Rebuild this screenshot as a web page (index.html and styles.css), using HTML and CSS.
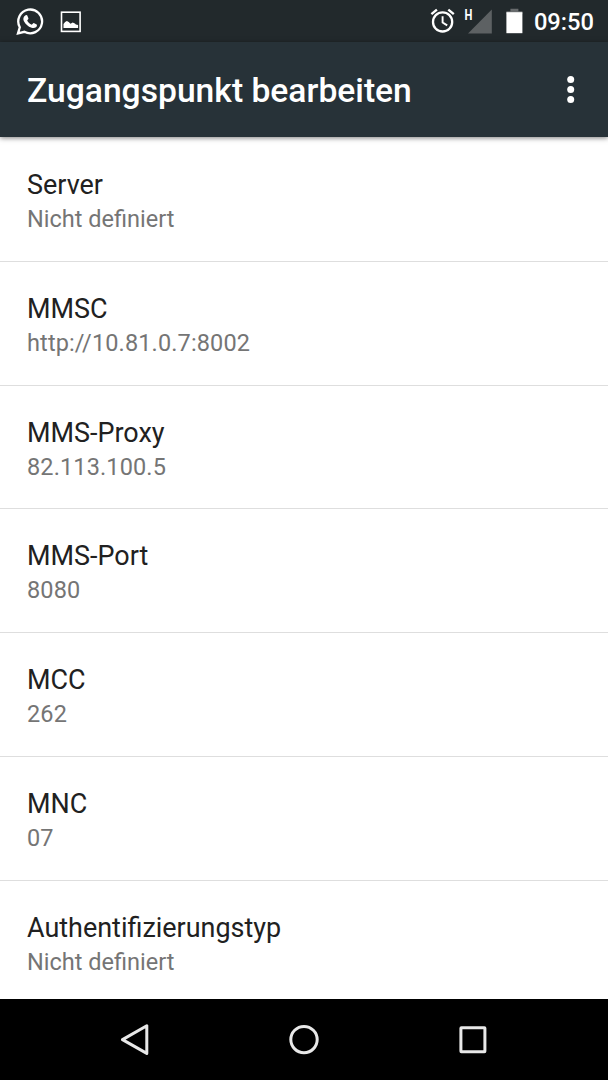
FILE: index.html
```
<!DOCTYPE html>
<html lang="de">
<head>
  <meta charset="UTF-8">
  <title>Zugangspunkt bearbeiten</title>
  <meta name="viewport" content="width=device-width, initial-scale=1.0">
  <link rel="stylesheet" href="styles.css">
</head>
<body>
  <div class="status-bar">
    <svg class="whatsapp" width="28" height="28" viewBox="0 0 28 28">
      <path d="M2 25.4 L3.8 19.2 A11.9 11.9 0 1 1 8.4 23.8 Z" fill="none" stroke="#fff" stroke-width="2.3"/>
      <path d="M9.6 7.3 C10.2 6.9 11 6.9 11.3 7.6 L12.4 10.2 C12.7 11 11.3 12 11.2 12.4 C11.9 14.2 13.8 15.9 15.8 16.7 C16.4 16.6 17.2 15 17.8 15.1 L20.7 16.5 C21.3 17 20.8 18.7 20 19.3 C18.8 20.2 17.2 20.3 15.6 19.8 C12 18.6 9.4 16.1 7.8 13 C6.7 10.8 7.6 8.3 9.6 7.3 Z" fill="#fff"/>
    </svg>
    <svg class="picture" width="21" height="22" viewBox="0 0 21 22">
      <rect x="1.5" y="1.2" width="18.6" height="19.2" fill="none" stroke="#fff" stroke-width="1.6"/>
      <path d="M3.5 17 V13 L5.1 11 L6.9 10 L8.7 11 L10.5 12.8 L12.7 11.6 L14.9 12.6 L15.9 13.6 L18.1 14 V17 Z" fill="#fff"/>
    </svg>
    <div class="spacer"></div>
    <svg class="alarm" width="25" height="26" viewBox="0 0 25 26">
      <circle cx="12.6" cy="13.9" r="9.6" fill="none" stroke="#fff" stroke-width="2.3"/>
      <path d="M1.4 6.2 L6.9 1.6 M18.3 1.6 L23.8 6.2" fill="none" stroke="#fff" stroke-width="2.4"/>
      <path d="M12.6 8.2 V14.5 L17.2 17.4" fill="none" stroke="#fff" stroke-width="1.9"/>
    </svg>
    <div class="network">
      <span class="network-type">H</span>
      <svg class="signal" width="24" height="25" viewBox="0 0 24 25">
        <path d="M0 24.4 L23.8 0.5 V24.4 Z" fill="#5d6163"/>
      </svg>
    </div>
    <svg class="battery" width="17" height="26" viewBox="0 0 17 26">
      <path d="M4.4 0.7 H12.4 V3.2 H16.4 V6 H0.4 V3.2 H4.4 Z" fill="#686b6d"/>
      <rect x="0.4" y="4.2" width="16" height="21" fill="#fff"/>
    </svg>
    <span class="clock">09:50</span>
  </div>

  <div class="app-bar">
    <h1>Zugangspunkt bearbeiten</h1>
    <svg class="menu" width="8" height="28" viewBox="0 0 8 28">
      <circle cx="3.7" cy="3.5" r="3.5" fill="#fff"/>
      <circle cx="3.7" cy="13.5" r="3.5" fill="#fff"/>
      <circle cx="3.7" cy="23.5" r="3.5" fill="#fff"/>
    </svg>
  </div>

  <div class="settings">
    <div class="item">
      <div class="name">Server</div>
      <div class="value">Nicht definiert</div>
    </div>
    <div class="item">
      <div class="name">MMSC</div>
      <div class="value number">http://10.81.0.7:8002</div>
    </div>
    <div class="item">
      <div class="name">MMS-Proxy</div>
      <div class="value number">82.113.100.5</div>
    </div>
    <div class="item">
      <div class="name">MMS-Port</div>
      <div class="value number">8080</div>
    </div>
    <div class="item">
      <div class="name">MCC</div>
      <div class="value number">262</div>
    </div>
    <div class="item">
      <div class="name">MNC</div>
      <div class="value number">07</div>
    </div>
    <div class="item">
      <div class="name">Authentifizierungstyp</div>
      <div class="value">Nicht definiert</div>
    </div>
  </div>

  <div class="nav-bar">
    <svg width="32" height="32" viewBox="0 0 32 32">
      <path d="M3.5 15.6 L27.8 1.8 V29.4 Z" fill="none" stroke="#e8e8e8" stroke-width="3" stroke-linejoin="round"/>
    </svg>
    <svg width="32" height="32" viewBox="0 0 32 32">
      <circle cx="16" cy="15.6" r="13.2" fill="none" stroke="#e8e8e8" stroke-width="3"/>
    </svg>
    <svg width="32" height="32" viewBox="0 0 32 32">
      <rect x="3.9" y="3.7" width="24" height="24" rx="0.5" fill="none" stroke="#e8e8e8" stroke-width="3" stroke-linejoin="round"/>
    </svg>
  </div>
</body>
</html>
```

FILE: styles.css
```
* {
  box-sizing: border-box;
}
body {
  margin: 0;
  height: 1080px;
  display: flex;
  flex-direction: column;
  overflow: hidden;
  font-family: Roboto, sans-serif;
  background-color: #fff;
}
svg {
  display: block;
  flex-shrink: 0;
}
.status-bar {
  height: 42px;
  flex-shrink: 0;
  display: flex;
  align-items: flex-start;
  padding: 8px 14px 0 16px;
  background-color: #22292c;
  color: #fff;
}
.picture {
  margin: 3px 0 0 16px;
}
.spacer {
  flex: 1;
}
.network {
  display: flex;
  margin: 1px 14px 0 9px;
}
.network-type {
  width: 4px;
  font-size: 14px;
  font-weight: 700;
  line-height: 13px;
  transform: scaleX(0.8);
}
.battery {
  margin-right: 11px;
}
.clock {
  font-size: 23.7px;
  font-weight: 500;
  line-height: 28px;
}
.app-bar {
  height: 95px;
  flex-shrink: 0;
  display: flex;
  align-items: center;
  justify-content: space-between;
  padding: 0 33px 0 27px;
  background-color: #273238;
  color: #fff;
  box-shadow: 0 1px 5px rgba(0, 0, 0, 0.5);
  z-index: 1;
}
h1 {
  margin: 2px 0 0;
  font-size: 33.65px;
  font-weight: 500;
  line-height: 40px;
}
.settings {
  flex: 1;
  min-height: 0;
  overflow: hidden;
}
.item {
  height: 123.8px;
  padding: 31px 27px 0;
}
.item + .item {
  padding-top: 30px;
  border-top: 1px solid #dedede;
}
.name {
  font-size: 26.95px;
  line-height: 34px;
  color: #212121;
}
.value {
  font-size: 23.5px;
  line-height: 34px;
  color: #757575;
}
.number {
  letter-spacing: 0.13px;
}
.nav-bar {
  height: 81px;
  flex-shrink: 0;
  display: flex;
  align-items: center;
  justify-content: center;
  gap: 137px;
  background-color: #000;
}
```
